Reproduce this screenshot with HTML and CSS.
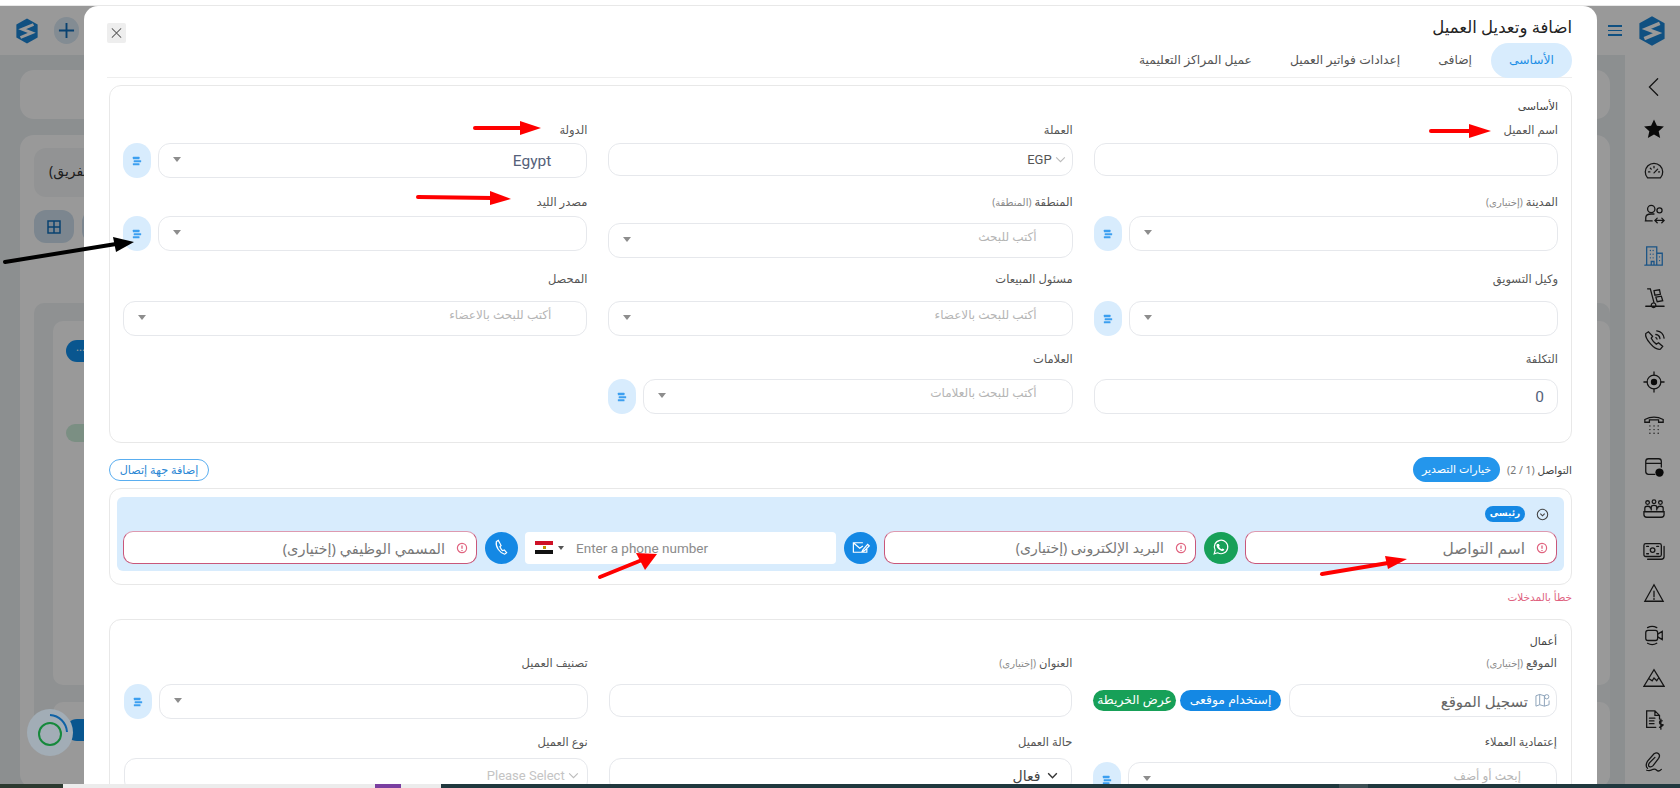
FILE: index.html
```html
<!DOCTYPE html>
<html lang="ar" dir="rtl">
<head>
  <meta charset="UTF-8">
  <meta name="viewport" content="width=device-width, initial-scale=1.0">
  <title>اضافة وتعديل العميل</title>
  <link rel="stylesheet" href="styles.css">
</head>
<body>
  <svg width="0" height="0" class="defs">
    <symbol id="logo" viewBox="0 0 40 44">
      <polygon points="20,1 38,11 38,33 20,43 2,33 2,11" fill="#1c86d8"/>
      <path d="M31 11 L12 19 L28 25 L9 33" fill="none" stroke="#fff" stroke-width="5"/>
    </symbol>
    <symbol id="stack" viewBox="0 0 12 12">
      <rect x="1" y="1" width="8" height="3" rx=".6"/>
      <rect x="2" y="5" width="9" height="2.4" rx=".6"/>
      <rect x="1" y="8.6" width="8" height="2.6" rx=".6"/>
    </symbol>
    <symbol id="alert" viewBox="0 0 12 12">
      <circle cx="6" cy="6" r="4.6" fill="none" stroke="currentColor" stroke-width="1.2"/>
      <path d="M6 3.4v3.4M6 8v1" stroke="currentColor" stroke-width="1.3"/>
    </symbol>
  </svg>

  <div class="app">
    <div class="topband"></div>

    <div class="shell">
      <aside class="sidebar">
        <div class="side-head">
          <svg class="side-logo"><use href="#logo"/></svg>
          <span class="burger"><i></i><i></i><i></i></span>
        </div>
        <nav class="side-nav">
          <svg viewBox="0 0 24 24"><path d="M16 3 L7 12 L16 21"/></svg>
          <svg viewBox="0 0 24 24"><path class="solid" d="M12 1.500l3.200 7 7.600.8-5.700 5.100 1.600 7.500L12 18.100l-6.700 3.800 1.600-7.500L1.200 9.300l7.600-.8z"/></svg>
          <svg viewBox="0 0 24 24"><path d="M5 19.500a9.500 9.500 0 1 1 14 0zM12 14l4-4M6 13h1.500M17 13h1M12 7v1.500M8 9l1 1"/></svg>
          <svg viewBox="0 0 24 24"><circle cx="9" cy="6.500" r="4"/><circle cx="18" cy="8" r="2.800"/><path d="M3 19v-3q0-4 6-4h3M2.500 19.500H10M14 19h8M15.500 16.500L13 19l2.500 2.500M20.500 16.500L23 19l-2.500 2.500"/></svg>
          <svg class="blue" viewBox="0 0 24 24"><path d="M4 22V2h11v20M15 9h6v13H2M8 6h.1M11 6h.1M8 10h.1M11 10h.1M8 14h.1M11 14h.1M9 22v-4h3v4M18 13h.1M18 17h.1"/></svg>
          <svg viewBox="0 0 24 24"><path d="M5 2h3l4 15M3 21h20M9 20a2.500 2.500 0 1 0 0-.1M12 4l6-1 1 5-6 1zM14 11l6-1 1.500 5-6 1z"/></svg>
          <svg viewBox="0 0 24 24"><path d="M6 3L3 5q-1 4 5 11t11 6l2.500-3-4.500-4-2.500 1.500Q11 14 9 10l1.500-2zM14 6q4 .5 4.500 4.500M15 2q7 1 8 8M14 9.500q1 .3 1.300 1.500"/></svg>
          <svg viewBox="0 0 24 24"><circle cx="12" cy="12" r="7.500"/><circle class="solid" cx="12" cy="12" r="3.500"/><path d="M12 1v3.500M12 19.500V23M1 12h3.500M19.500 12H23"/></svg>
          <svg viewBox="0 0 24 24"><path d="M2 9V6q10-5 20 0v3h-5V6.500H7V9zM7.500 13h.1M12 13h.1M16.500 13h.1M7.500 17h.1M12 17h.1M16.500 17h.1M7.500 21h.1M12 21h.1M16.500 21h.1"/></svg>
          <svg viewBox="0 0 24 24"><path d="M13 20H6a3 3 0 0 1-3-3V6a3 3 0 0 1 3-3h11a3 3 0 0 1 3 3v6M3 8h17"/><circle class="solid" cx="18" cy="18" r="4.500"/></svg>
          <svg viewBox="0 0 24 24"><circle cx="5" cy="5" r="2"/><circle cx="12" cy="4" r="2"/><circle cx="19" cy="5" r="2"/><path d="M2 14v-3q0-2 3-2t3 2M9 13v-3q0-2 3-2t3 2v3M16 11q0-2 3-2t3 2v3M1 15h22v3a3 3 0 0 1-3 3H4a3 3 0 0 1-3-3z"/></svg>
          <svg viewBox="0 0 24 24"><rect x="1" y="4" width="19" height="14" rx="2"/><circle cx="10.500" cy="11" r="2.500"/><path d="M4 7h2M4 15h2M15 7h2M15 15h2M23 7v11a3 3 0 0 1-3 3H5"/></svg>
          <svg viewBox="0 0 24 24"><path d="M12 3L2 21h20zM12 10v6M12 18v1"/></svg>
          <svg viewBox="0 0 24 24"><rect x="3" y="7" width="13" height="11" rx="2.500"/><path d="M16 11l5-3v9l-5-3M5 4q5-3 10 0M5 21q5 3 10 0"/></svg>
          <svg viewBox="0 0 24 24"><path d="M1 21L12 3l5 8 6 10zM7 13l3 2 2-3 3 3 2-3"/></svg>
          <svg viewBox="0 0 24 24"><path d="M14 20H4V2h9l5 5v4M13 2v5h5M7 10h6M7 13h5M7 16h5M21 13q-3-1-3 1.500t3 2.500-3 3M19.500 11v11"/></svg>
          <svg viewBox="0 0 24 24"><path d="M5 19q-3-3 0-8l7-8q3-2 5 0t0 5l-6 8q-2 2-4 1t0-4l6-6M4 21q4 1 7-1 2-1 4 1t5-1"/></svg>
        </nav>
      </aside>

      <main class="page">
        <header class="page-head">
          <svg class="head-logo"><use href="#logo"/></svg>
          <span class="add-btn">
            <svg viewBox="0 0 18 18"><path d="M9 1v16M1 9h16"/></svg>
          </span>
        </header>
        <div class="page-body">
          <div class="bg-card bar"></div>
          <div class="bg-card filters">
            <div class="filter-select">(الفريق</div>
            <div class="view-btns">
              <span class="view-btn">
                <svg viewBox="0 0 14 14"><path d="M1 1h12v12H1zM7 1v12M1 7h12"/></svg>
              </span>
              <span class="view-btn"></span>
            </div>
            <div class="lane">
              <div class="lane-card">
                <span class="dots">...</span>
                <span class="green-pill"></span>
              </div>
              <div class="lane-card second">
                <span class="dots low"></span>
              </div>
            </div>
          </div>
        </div>
      </main>
    </div>

    <div class="backdrop"></div>

    <div class="float-ring">
      <svg viewBox="0 0 46 46">
        <circle cx="23" cy="25" r="11" fill="none" stroke="#16893c" stroke-width="2"/>
        <path d="M23 6a18 18 0 0 1 17 17" fill="none" stroke="#0f62a6" stroke-width="2"/>
      </svg>
    </div>

    <section class="modal">
      <div class="modal-head">
        <h1>اضافة وتعديل العميل</h1>
        <button class="close-btn" type="button">
          <svg viewBox="0 0 14 14"><path d="M2 2l10 10M12 2L2 12"/></svg>
        </button>
      </div>

      <div class="tabs">
        <a class="tab active">الأساسى</a>
        <a class="tab">إضافى</a>
        <a class="tab">إعدادات فواتير العميل</a>
        <a class="tab">عميل المراكز التعليمية</a>
      </div>

      <div class="card basics">
        <div class="card-title">الأساسى</div>

        <div class="row r1">
          <div class="field">
            <label>اسم العميل</label>
            <div class="ctl"></div>
          </div>
          <div class="field">
            <label>العملة</label>
            <div class="ctl small">
              <svg class="chev faint" viewBox="0 0 12 12"><path d="M2 4l4 4 4-4"/></svg>
              <span>EGP</span>
            </div>
          </div>
          <div class="field">
            <label>الدولة</label>
            <div class="pick">
              <div class="ctl tall value"><span>Egypt</span><i class="arrow"></i></div>
              <span class="side-btn"><svg><use href="#stack"/></svg></span>
            </div>
          </div>
        </div>

        <div class="row r2">
          <div class="field">
            <label>المدينة <small>(إختيارى)</small></label>
            <div class="pick">
              <div class="ctl tall"><i class="arrow"></i></div>
              <span class="side-btn"><svg><use href="#stack"/></svg></span>
            </div>
          </div>
          <div class="field lower">
            <label>المنطقة <small>(المنطقة)</small></label>
            <div class="ctl tall hint"><span>أكتب للبحث</span><i class="arrow"></i></div>
          </div>
          <div class="field">
            <label>مصدر الليد</label>
            <div class="pick">
              <div class="ctl tall"><i class="arrow"></i></div>
              <span class="side-btn"><svg><use href="#stack"/></svg></span>
            </div>
          </div>
        </div>

        <div class="row r3">
          <div class="field">
            <label>وكيل التسويق</label>
            <div class="pick">
              <div class="ctl tall"><i class="arrow"></i></div>
              <span class="side-btn"><svg><use href="#stack"/></svg></span>
            </div>
          </div>
          <div class="field">
            <label>مسئول المبيعات</label>
            <div class="ctl tall hint"><span>أكتب للبحث بالاعضاء</span><i class="arrow"></i></div>
          </div>
          <div class="field">
            <label>المحصل</label>
            <div class="ctl tall hint"><span>أكتب للبحث بالاعضاء</span><i class="arrow"></i></div>
          </div>
        </div>

        <div class="row r4">
          <div class="field">
            <label>التكلفة</label>
            <div class="ctl tall value number"><span>0</span></div>
          </div>
          <div class="field">
            <label>العلامات</label>
            <div class="pick">
              <div class="ctl tall hint"><span>أكتب للبحث بالعلامات</span><i class="arrow"></i></div>
              <span class="side-btn"><svg><use href="#stack"/></svg></span>
            </div>
          </div>
          <div class="field"></div>
        </div>
      </div>

      <div class="contact-head">
        <span class="contact-title">التواصل <small>(1 / 2)</small></span>
        <span class="export-btn">خيارات التصدير</span>
        <span class="add-contact">إضافة جهة إتصال</span>
      </div>

      <div class="card contact-card">
        <div class="contact-panel">
          <div class="contact-top">
            <svg class="toggle" viewBox="0 0 12 12"><circle cx="6" cy="6" r="4.800"/><path d="M4 5.200l2 2 2-2"/></svg>
            <span class="main-badge">رئيسى</span>
          </div>
          <div class="contact-row">
            <div class="c-field first">
              <svg class="alert"><use href="#alert"/></svg>
              <span>اسم التواصل</span>
            </div>
            <span class="round-btn green">
              <svg viewBox="0 0 24 24"><path d="M4 20l1.300-4.500a8.500 8.500 0 1 1 3.200 3.200z"/><path class="solid" d="M9 7.500l1 .2 1 2.200-.8 1.200q1 2 3 3l1.200-.9 2.200 1v1q-1 1.600-3 1.200-5.500-1.500-6.700-6.800 0-1.600 1.100-2.100z"/></svg>
            </span>
            <div class="c-field">
              <svg class="alert"><use href="#alert"/></svg>
              <span>البريد الإلكترونى (إختيارى)</span>
            </div>
            <span class="round-btn">
              <svg viewBox="0 0 24 24"><path d="M20 12v6H3V6h12M3 6l8 7 4-3M15 15l6-7 2 2-6 6-3 1z"/></svg>
            </span>
            <div class="phone-field">
              <span class="flag"><i></i></span>
              <i class="flag-caret"></i>
              <span class="phone-hint">Enter a phone number</span>
            </div>
            <span class="round-btn">
              <svg viewBox="0 0 24 24"><path d="M8 3L5.500 4.500q-1 5 2.500 10t8 6l2.500-2-3-3.500-2 1q-2-1.500-3.500-5l1.500-1.500z"/></svg>
            </span>
            <div class="c-field wide">
              <svg class="alert"><use href="#alert"/></svg>
              <span>المسمي الوظيفي (إختيارى)</span>
            </div>
          </div>
        </div>
      </div>

      <div class="input-error">خطأ بالمدخلات</div>

      <div class="card business">
        <div class="card-title">أعمال</div>
        <div class="row b1">
          <div class="field">
            <label>الموقع <small>(إختيارى)</small></label>
            <div class="loc-row">
              <div class="ctl loc">
                <svg class="map" viewBox="0 0 16 16"><path d="M1 3l4-1.500 5 1.500 1-.3M1 3v11l4-1.500 5 1.500 5-1.500V8M5 1.500v11M10 3v11"/><circle cx="12.500" cy="4" r="2.300"/></svg>
                <span>تسجيل الموقع</span>
              </div>
              <span class="pill blue">إستخدام موقعى</span>
              <span class="pill green">عرض الخريطة</span>
            </div>
          </div>
          <div class="field">
            <label>العنوان <small>(إختيارى)</small></label>
            <div class="ctl"></div>
          </div>
          <div class="field">
            <label>تصنيف العميل</label>
            <div class="pick">
              <div class="ctl tall"><i class="arrow"></i></div>
              <span class="side-btn"><svg><use href="#stack"/></svg></span>
            </div>
          </div>
        </div>
        <div class="row b2">
          <div class="field lower">
            <label>إعتمادية العملاء</label>
            <div class="pick">
              <div class="ctl tall hint"><span>إبحث أو أضف</span><i class="arrow"></i></div>
              <span class="side-btn"><svg><use href="#stack"/></svg></span>
            </div>
          </div>
          <div class="field">
            <label>حالة العميل</label>
            <div class="ctl tall status">
              <svg class="chev" viewBox="0 0 12 12"><path d="M2 4l4 4 4-4"/></svg>
              <span>فعال</span>
            </div>
          </div>
          <div class="field">
            <label>نوع العميل</label>
            <div class="ctl tall small muted">
              <svg class="chev faint" viewBox="0 0 12 12"><path d="M2 4l4 4 4-4"/></svg>
              <span>Please Select</span>
            </div>
          </div>
        </div>
      </div>
    </section>

    <footer class="taskbar">
      <span class="task-left"></span>
      <span class="task-window"><i></i></span>
      <span class="task-rest"><i></i></span>
    </footer>

    <!-- arrows drawn on top of the screenshot -->
    <svg class="marks" viewBox="0 0 1680 788">
      <g class="red">
        <path d="M1431 131H1470"/><polygon points="1469,124 1491,131 1469,138"/>
        <path d="M475 128H522"/><polygon points="520,121 541,128 520,135"/>
        <path d="M418 197L492 198"/><polygon points="490,191 511,199 490,205"/>
        <path d="M600 577L642 560"/><polygon points="636,553 657,554 645,570"/>
        <path d="M1322 574L1388 563"/><polygon points="1385,556 1407,559 1388,569"/>
      </g>
      <g class="black">
        <path d="M5 262L116 244"/><polygon points="113,237 134,242 116,252"/>
      </g>
    </svg>
  </div>
</body>
</html>
```

FILE: styles.css
```css
* {
  box-sizing: border-box;
}
html, body {
  margin: 0;
  height: 100%;
}
body {
  font-family: "Noto Sans", "DejaVu Sans", sans-serif;
  font-size: 11px;
  color: #333;
  background: #fff;
  overflow: hidden;
}
.defs {
  position: absolute;
}
.app {
  position: relative;
  width: 1680px;
  height: 788px;
  display: flex;
  flex-direction: column;
  overflow: hidden;
}
.topband {
  height: 6px;
  background: #fff;
  border-bottom: 1px solid #e8e8e8;
  flex: none;
}
.shell {
  flex: 1;
  display: flex;
  min-height: 0;
}

/* page behind the dialog */
.sidebar {
  width: 55px;
  flex: none;
  background: #fff;
}
.side-head {
  height: 49px;
  padding-top: 9px;
  position: relative;
}
.side-logo {
  display: block;
  width: 28px;
  height: 32px;
  margin-right: 14px;
}
.burger {
  position: absolute;
  left: -17px;
  top: 19px;
  width: 14px;
}
.burger i {
  display: block;
  height: 1.500px;
  background: #1c86d8;
  margin-bottom: 3px;
}
.side-nav {
  display: flex;
  flex-direction: column;
  align-items: center;
  gap: 20.200px;
  padding-top: 21px;
}
.side-nav svg {
  width: 22px;
  height: 22px;
  flex: none;
  fill: none;
  stroke: #222;
  stroke-width: 1.400;
  stroke-linecap: round;
  margin-right: -2px;
}
.side-nav svg.blue {
  stroke: #2f8de0;
}
.side-nav .solid {
  fill: #111;
  stroke: none;
}
.page {
  flex: 1;
  min-width: 0;
  display: flex;
  flex-direction: column;
  background: #e9eef1;
}
.page-head {
  height: 49px;
  flex: none;
  background: #fff;
  display: flex;
  direction: ltr;
  align-items: center;
  padding-left: 15px;
  gap: 15px;
}
.head-logo {
  width: 24px;
  height: 26px;
}
.add-btn {
  width: 25px;
  height: 27px;
  border-radius: 13px;
  background: #dbe9f5;
  display: flex;
  align-items: center;
  justify-content: center;
}
.add-btn svg {
  width: 17px;
  height: 17px;
  fill: none;
  stroke: #0f6fbc;
  stroke-width: 2;
}
.page-body {
  flex: 1;
  padding: 15px 15px 0 20px;
  display: flex;
  flex-direction: column;
  gap: 16px;
  min-height: 0;
}
.bg-card {
  background: #fff;
  border-radius: 14px;
}
.bar {
  height: 49px;
  flex: none;
}
.filters {
  flex: 1;
  direction: ltr;
  padding: 13px 0 0 14px;
  position: relative;
  overflow: hidden;
}
.filter-select {
  width: 200px;
  height: 49px;
  border-radius: 12px;
  background: #f4f6f7;
  font-size: 14px;
  color: #333;
  line-height: 46px;
  text-indent: 15px;
}
.view-btns {
  display: flex;
  gap: 8px;
  margin-top: 13px;
}
.view-btn {
  width: 40px;
  height: 33px;
  border-radius: 12px;
  background: #cfe0ee;
  display: flex;
  align-items: center;
  justify-content: center;
}
.view-btn svg {
  width: 14px;
  height: 14px;
  fill: none;
  stroke: #0f6fbc;
  stroke-width: 1.500;
}
.lane {
  margin-top: 60px;
  background: #eef2f4;
  border-radius: 10px;
  height: 440px;
  padding: 18px 0 0 19px;
}
.lane-card {
  background: #fff;
  border-radius: 10px;
  height: 364px;
  padding: 19px 0 0 13px;
  position: relative;
}
.lane-card.second {
  margin-top: 17px;
}
.dots {
  display: block;
  width: 40px;
  height: 22px;
  border-radius: 11px;
  background: #0f8fee;
  color: #fff;
  padding-left: 10px;
  line-height: 14px;
}
.dots.low {
  margin-top: -2px;
}
.green-pill {
  display: block;
  width: 40px;
  height: 18px;
  margin-top: 62px;
  border-radius: 9px;
  background: #cdeedb;
}
.backdrop {
  position: absolute;
  inset: 6px 0 0 0;
  background: rgba(0, 0, 0, 0.4);
}
.float-ring {
  position: absolute;
  left: 27px;
  top: 709px;
  width: 46px;
  height: 47px;
  border-radius: 50%;
  background: #a2adb6;
}

/* dialog */
.modal {
  position: absolute;
  left: 84px;
  top: 6px;
  bottom: 0;
  width: 1513px;
  background: #fff;
  border-radius: 14px 14px 0 0;
  padding: 0 25px;
  overflow: hidden;
}
.modal-head {
  height: 37px;
  display: flex;
  justify-content: space-between;
  align-items: flex-start;
  padding-top: 10px;
}
h1 {
  margin: 0;
  font-size: 16.500px;
  line-height: 22px;
  font-weight: 500;
  color: #222;
}
.close-btn {
  width: 19px;
  height: 20px;
  margin: 7px 0 0 -2px;
  padding: 3px;
  border: 0;
  background: #eee;
  border-radius: 2px;
}
.close-btn svg {
  display: block;
  width: 13px;
  height: 14px;
  fill: none;
  stroke: #666;
  stroke-width: 1.100;
}
.tabs {
  display: flex;
  height: 35px;
  border-bottom: 1px solid #eee;
  margin-left: -2px;
  font-size: 12.300px;
  color: #555;
}
.tab {
  height: 35px;
  line-height: 33px;
  padding: 0 19px;
  text-align: center;
  border-radius: 18px;
}
.tab.active {
  width: 81px;
  padding: 0;
  background: #d8ecfd;
  color: #1e8fe6;
}
.card {
  background: #fff;
  border: 1px solid #e8e8e8;
  border-radius: 12px;
}
.basics {
  margin-top: 7px;
  height: 358px;
  padding: 12px 13px 0;
}
.card-title {
  height: 16px;
  line-height: 16px;
  font-size: 11px;
  color: #444;
}
.row {
  display: grid;
  grid-template-columns: repeat(3, 1fr);
  column-gap: 21px;
}
.field {
  min-width: 0;
}
.field label {
  display: block;
  height: 16px;
  line-height: 16px;
  font-size: 11.500px;
  font-weight: 400;
  color: #555;
  margin-bottom: 5px;
}
.field label small {
  font-size: 10px;
  color: #888;
}
.r1 { margin-top: 8px; }
.r2 { margin-top: 16px; }
.r2 .field label { margin-bottom: 6px; }
.r2 .lower label { margin-bottom: 13px; }
.r3 { margin-top: 13px; }
.r3 .field label { margin-bottom: 14px; }
.r4 { margin-top: 15px; }
.r4 .field label { margin-bottom: 12px; }
.ctl {
  height: 33px;
  border: 1px solid #e6e8ec;
  border-radius: 12px;
  display: flex;
  align-items: center;
  position: relative;
  background: #fff;
  padding-right: 35px;
  font-size: 14px;
}
.ctl.tall {
  height: 35px;
}
.ctl.value {
  color: #55617a;
  font-family: Roboto, "Noto Sans", sans-serif;
  font-size: 15.500px;
}
.ctl.number {
  padding-right: 13px;
}
.ctl.small {
  padding-right: 5px;
  font-family: Roboto, "Noto Sans", sans-serif;
  font-size: 13px;
  color: #555;
  gap: 2px;
}
.ctl.hint {
  font-size: 12px;
  color: #b5b5b5;
  padding-bottom: 8px;
}
.ctl.muted {
  color: #c4c4c4;
  padding-right: 7px;
}
.ctl .arrow {
  position: absolute;
  left: 14px;
  top: 13px;
  border: 4px solid transparent;
  border-top: 5px solid #8d8d8d;
  border-bottom: 0;
}
.chev {
  width: 13px;
  height: 13px;
  fill: none;
  stroke: #333;
  stroke-width: 1.300;
  flex: none;
}
.chev.faint {
  stroke: #bbb;
  stroke-width: 1;
}
.pick {
  display: flex;
  gap: 7px;
}
.pick .ctl {
  flex: 1;
  min-width: 0;
}
.side-btn {
  width: 28px;
  height: 35px;
  flex: none;
  border-radius: 14px;
  background: #d8ecfd;
  display: flex;
  align-items: center;
  justify-content: center;
}
.side-btn svg {
  width: 10px;
  height: 10px;
  fill: #3c9ff0;
}
.status {
  padding-right: 12px;
  gap: 6px;
  color: #444;
  font-size: 14px;
}

/* contacts */
.contact-head {
  display: flex;
  align-items: center;
  height: 25px;
  margin-top: 14px;
}
.contact-title {
  font-size: 10.500px;
  color: #444;
}
.contact-title small {
  font-size: 10.500px;
  color: #777;
}
.export-btn {
  height: 25px;
  line-height: 23px;
  width: 87px;
  text-align: center;
  margin-right: 7px;
  border-radius: 13px;
  background: #2496ec;
  color: #fff;
  font-size: 11px;
}
.add-contact {
  margin-right: auto;
  height: 22px;
  width: 100px;
  line-height: 19px;
  text-align: center;
  border: 1px solid #5aaef0;
  border-radius: 11px;
  font-size: 11.200px;
  color: #2a87d4;
}
.contact-card {
  margin-top: 6px;
  height: 97px;
  padding: 8px 7px 0;
}
.contact-panel {
  height: 74px;
  background: #d8ecfd;
  border-radius: 6px;
  padding: 0 7px 0 6px;
}
.contact-top {
  height: 34px;
  display: flex;
  align-items: center;
  gap: 11px;
  padding: 0 8px 0 0;
}
.toggle {
  width: 13px;
  height: 13px;
  fill: none;
  stroke: #444;
  stroke-width: 1;
}
.main-badge {
  height: 16px;
  width: 40px;
  line-height: 14px;
  text-align: center;
  border-radius: 8px;
  background: #1488e4;
  color: #fff;
  font-size: 9px;
  font-weight: 700;
}
.contact-row {
  display: flex;
  align-items: center;
  gap: 7.500px;
}
.c-field {
  width: 312px;
  height: 33px;
  flex: none;
  background: #fff;
  border: 1px solid #c9577a;
  border-top-color: #dd9ab0;
  border-radius: 10px;
  display: flex;
  align-items: center;
  padding-right: 8px;
  gap: 11px;
  color: #777;
  font-size: 14px;
}
.c-field.first {
  font-size: 15.500px;
}
.c-field.wide {
  flex: 1;
  width: auto;
  min-width: 0;
  font-size: 14.500px;
}
.alert {
  width: 12px;
  height: 12px;
  color: #e0637f;
  flex: none;
}
.round-btn {
  width: 33px;
  height: 32px;
  flex: none;
  border-radius: 50%;
  background: #1488e4;
  display: flex;
  align-items: center;
  justify-content: center;
}
.round-btn.green {
  width: 34px;
  background: #17a058;
}
.round-btn svg {
  width: 19px;
  height: 19px;
  fill: none;
  stroke: #fff;
  stroke-width: 1.500;
}
.round-btn .solid {
  fill: #fff;
  stroke: none;
}
.phone-field {
  width: 311px;
  height: 32px;
  flex: none;
  direction: ltr;
  background: #fff;
  border-radius: 4px;
  display: flex;
  align-items: center;
  padding-left: 10px;
}
.flag {
  width: 18px;
  height: 13px;
  background: linear-gradient(#ce1126 33%, #fff 33% 66%, #111 66%);
  display: flex;
  align-items: center;
  justify-content: center;
}
.flag i {
  width: 3px;
  height: 3px;
  background: #c09300;
}
.flag-caret {
  margin-left: 5px;
  border: 3.500px solid transparent;
  border-top: 4px solid #555;
  border-bottom: 0;
}
.phone-hint {
  margin-left: 12px;
  font-family: Roboto, sans-serif;
  font-size: 13.500px;
  color: #8b8b8b;
}
.input-error {
  height: 16px;
  margin-top: 4px;
  line-height: 16px;
  font-size: 10.500px;
  color: #e0637f;
}
.business {
  margin-top: 14px;
  height: 260px;
  padding: 13px 14px 0;
}
.b1 { margin-top: 6px; }
.b1 .field label { margin-bottom: 13px; }
.b2 { margin-top: 15px; }
.b2 .field label { margin-bottom: 8px; }
.b2 .lower label { margin-bottom: 12px; }
.loc-row {
  display: flex;
  align-items: center;
  gap: 4px;
}
.ctl.loc {
  flex: none;
  width: 268px;
  margin-left: 4px;
  padding-right: 6px;
  gap: 7px;
  color: #666;
  font-size: 15px;
}
.map {
  width: 15px;
  height: 15px;
  flex: none;
  fill: none;
  stroke: #8aa0b8;
  stroke-width: 1;
}
.pill {
  height: 21px;
  line-height: 19px;
  text-align: center;
  border-radius: 11px;
  color: #fff;
  font-size: 12.400px;
  flex: none;
}
.pill.blue {
  width: 101px;
  background: #1488e4;
}
.pill.green {
  width: 83px;
  background: #17a058;
}
.taskbar {
  position: absolute;
  left: 0;
  right: 0;
  bottom: 0;
  height: 4px;
  display: flex;
  direction: ltr;
}
.task-left {
  width: 63px;
  background: #2c3a30;
}
.task-window {
  width: 378px;
  background: #ececec;
  position: relative;
}
.task-window i {
  position: absolute;
  left: 312px;
  top: 0;
  width: 26px;
  height: 4px;
  background: #7a3fa0;
}
.task-rest {
  flex: 1;
  background: #20383e;
  position: relative;
}
.task-rest i {
  position: absolute;
  left: 898px;
  top: 0;
  width: 29px;
  height: 4px;
  background: #3d4f54;
}
.marks {
  position: absolute;
  inset: 0;
  width: 1680px;
  height: 788px;
  pointer-events: none;
}
.marks path {
  fill: none;
  stroke-width: 4;
  stroke-linecap: round;
}
.marks .red path { stroke: #f00; }
.marks .red polygon { fill: #f00; }
.marks .black path { stroke: #000; }
.marks .black polygon { fill: #000; }
```
